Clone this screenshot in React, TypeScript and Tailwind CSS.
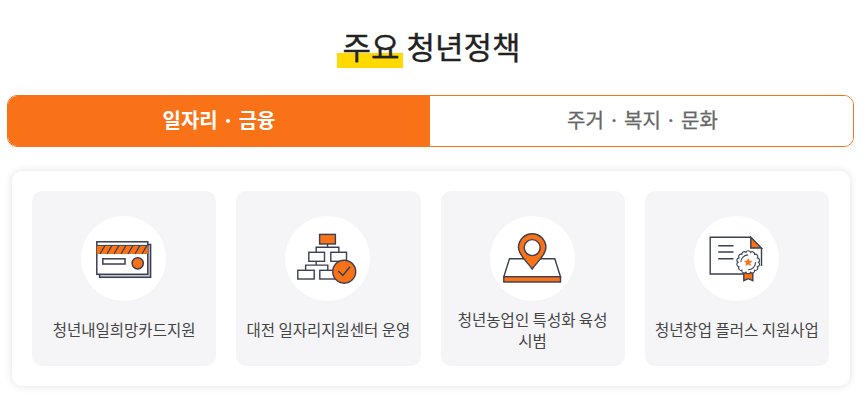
const font = "font-['Noto_Sans_CJK_KR','Noto_Sans',sans-serif]";
const ink = "#3a3f52";
const orange = "#f97218";

// scalloped edge of the certificate seal
const sealPath = Array.from({ length: 14 }, (_, i) => {
  const a = (i / 14) * Math.PI * 2;
  const x = (54.2 + Math.cos(a) * 10.2).toFixed(2);
  const y = (46.3 + Math.sin(a) * 10.2).toFixed(2);
  return i === 0 ? `M${x} ${y}` : `A2.4 2.4 0 0 1 ${x} ${y}`;
}).join(" ") + " A2.4 2.4 0 0 1 64.4 46.3z";

function CardIcon() {
  return (
    <svg width="85" height="85" viewBox="0 0 85 85" fill="none" stroke={ink} strokeWidth="1.5">
      <rect x="18.6" y="28.5" width="51" height="32.8" fill="#c9ccd6" />
      <rect x="15.8" y="25.8" width="51" height="32.5" fill="#fff" />
      <rect x="15.8" y="29.4" width="51" height="8.6" fill={orange} stroke="none" />
      <path d="M15.8 29.4h51" strokeWidth="1" />
      <path d="M19 38l5-8.6M26 38l5-8.6M33 38l5-8.6M40 38l5-8.6M47 38l5-8.6M54 38l5-8.6M61 38l5-8.6" strokeWidth="1.2" />
      <rect x="21.8" y="42.8" width="22.2" height="5.2" />
      <circle cx="56.7" cy="47.3" r="5.6" fill={orange} />
    </svg>
  );
}

function OrgIcon() {
  return (
    <svg width="85" height="85" viewBox="0 0 85 85" fill="none" stroke={ink} strokeWidth="1.4">
      <rect x="34.6" y="18.4" width="15.8" height="9.6" fill={orange} />
      <path d="M42.5 28v3.4M31.2 36.3v-5h22.6v5M31.2 45.3v3.8M20.6 54.3v-5.2h22.2v5.2" />
      <rect x="23.8" y="36.3" width="15.7" height="9" fill="#fff" />
      <rect x="45.8" y="36.3" width="15.7" height="9" fill="#fff" />
      <rect x="12.8" y="54.3" width="16.4" height="8.7" fill="#fff" />
      <rect x="34.8" y="54.3" width="16.4" height="8.7" fill="#fff" />
      <circle cx="59.2" cy="55.7" r="11.5" fill={orange} />
      <path d="M53.2 55l4.6 4.4 7.2-8.6" strokeWidth="1.5" />
    </svg>
  );
}

function PinIcon() {
  return (
    <svg width="85" height="85" viewBox="0 0 85 85" fill="none" stroke={ink} strokeWidth="1.4">
      <path d="M19.5 42.7h45.3l5.7 18H13.8z" fill="#fff" />
      <rect x="13.8" y="60.7" width="56.7" height="5.3" fill={orange} />
      <path d="M42.2 53C38 46.5 28.5 39.5 28.5 31.5a13.7 13.7 0 0 1 27.4 0C55.9 39.500 46.4 46.500 42.2 53z" fill={orange} />
      <circle cx="42.2" cy="31.6" r="8" fill="#fff" />
    </svg>
  );
}

function CertIcon() {
  return (
    <svg width="85" height="85" viewBox="0 0 85 85" fill="none" stroke={ink} strokeWidth="1.4">
      <path d="M56.8 21.3H16.2V58h36M67.500 32v18" />
      <path d="M56.8 21.3l10.7 10.7H56.8z" fill={orange} />
      <path d="M24.2 29.7h15.3M24.2 36h15.3M24.2 42.7h15.3" />
      <path d="M49.8 56.500v8.200l4.500-2 4.500 2v-8.200z" fill={orange} />
      <path d={sealPath} fill="#fff" strokeWidth="1.1" />
      <path d="M46.800 46.300a7.400 7.400 0 0 1 7.400-7.400M61.600 46.300a7.400 7.400 0 0 1-7.400 7.400" strokeWidth="1.1" />
      <path d="M54.200 41.900l1.300 2.800 3 .4-2.200 2 .6 3-2.700-1.500-2.700 1.500.6-3-2.200-2 3-.4z" fill={orange} stroke="none" />
    </svg>
  );
}

const items = [
  { label: "청년내일희망카드지원", icon: <CardIcon /> },
  { label: "대전 일자리지원센터 운영", icon: <OrgIcon /> },
  { label: "청년농업인 특성화 육성 시범", icon: <PinIcon /> },
  { label: "청년창업 플러스 지원사업", icon: <CertIcon /> },
];

export default function App() {
  return (
    <div className={`${font} h-[400px] w-[868px] overflow-hidden bg-white pl-[7px]`}>
      <div className="w-[847px]">
        <h2 className="flex h-[95px] items-start justify-center pt-[25px] pl-[2px] text-[31px] leading-[42px] font-normal text-[#222] [-webkit-text-stroke:0.35px_#222]">
          <span className="relative">
            <span className="absolute -left-[5px] top-[28px] h-[15px] w-[66px] bg-[#ffd900]" />
            <span className="relative">주요</span>
          </span>
          <span className="whitespace-pre"> 청년정책</span>
        </h2>

        <div className="flex h-[52px] overflow-hidden rounded-[10px] border border-[#f97218]">
          <button className="flex w-[422px] items-center justify-center bg-[#f97218] pb-[2px] text-[20px] font-bold text-white">
            일자리 · 금융
          </button>
          <button className="flex flex-1 items-center justify-center bg-white pb-[2px] pl-[2px] text-[20px] font-normal text-[#666] [-webkit-text-stroke:0.3px_#666]">
            주거 · 복지 · 문화
          </button>
        </div>

        <div className="mt-[24px] ml-[5px] grid h-[215px] w-[838px] grid-cols-4 gap-x-[20px] rounded-[10px] bg-white py-[20px] pr-[21px] pl-[20px] shadow-[0_0_8px_rgba(0,0,0,0.12)]">
          {items.map((item) => (
            <div key={item.label} className="flex flex-col items-center rounded-[10px] bg-[#f5f5f8] px-[10px] pt-[25px]">
              <div className="mr-[1px] flex h-[85px] w-[85px] shrink-0 items-center justify-center rounded-full bg-white">
                {item.icon}
              </div>
              <p className="flex h-[57px] items-center text-center text-[15.5px] leading-[21px] text-[#444]">
                {item.label}
              </p>
            </div>
          ))}
        </div>
      </div>
    </div>
  );
}
